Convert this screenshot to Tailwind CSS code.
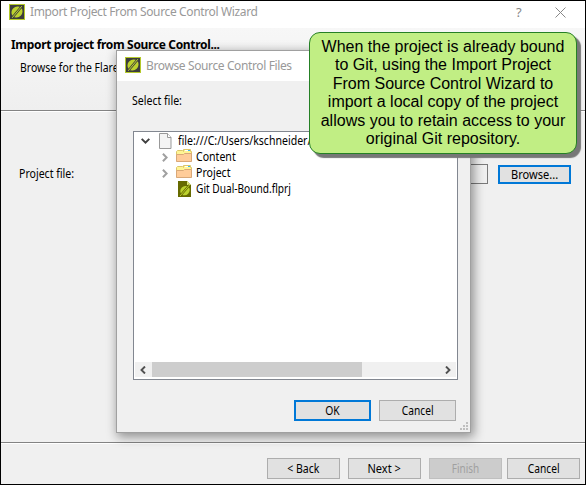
<!DOCTYPE html>
<html lang="en">
<head>
<meta charset="utf-8">
<title>Import Project From Source Control Wizard</title>
<script src="https://cdn.jsdelivr.net/npm/@tailwindcss/browser@4"></script>
</head>
<body class="w-[586px] h-[485px] overflow-hidden bg-[#f0f0f0] font-['Noto_Sans',sans-serif] text-[12px] leading-[16px] text-black whitespace-nowrap">
<svg class="hidden">
  <symbol id="flare" viewBox="0 0 16 16">
    <rect x=".5" y=".5" width="15" height="15" fill="#3d3d3d" stroke="#b4c92b"/>
    <ellipse cx="8" cy="8" rx="5.9" ry="5.2" transform="rotate(-45 8 8)" fill="#bdd22e"/>
    <path d="M3 14L13 2" stroke="#3d3d3d" stroke-width="2.4" fill="none"/>
    <path d="M3.2 13.8L12.8 2.2" stroke="#c3d82e" stroke-width="1" fill="none"/>
  </symbol>
  <symbol id="folder" viewBox="0 0 16 13">
    <path d="M.5 12V2.5l1-1h5l1 1V.5h7v2h1V12z" fill="#fff594" stroke="#dcc66a"/>
    <path d="M9 1h5v1H9z" fill="#fff"/><path d="M12 1h2v1h-2z" fill="#39b8e8"/>
    <path d="M.5 5.5h7l1-1h7v8H.5z" fill="#ffcc99" stroke="#d9a878"/>
  </symbol>
</svg>
<div class="relative w-[586px] h-[485px] border border-black flex flex-col">
  <header class="h-[27px] bg-white flex shrink-0 pl-2 pt-[3px]">
    <svg class="w-4 h-4"><use href="#flare"/></svg>
    <span class="ml-[5px] w-[486px] text-[#999] tracking-[-0.36px]">Import Project From Source Control Wizard</span>
    <span class="w-[10px] text-[#888] text-[13px]">?</span>
    <svg class="ml-[29px] mt-[3px] w-[11px] h-[11px]" viewBox="0 0 11 11"><path d="M.5.5l10 10M10.5.5l-10 10" stroke="#888" fill="none"/></svg>
  </header>
  <section class="h-[83px] shrink-0 bg-linear-to-b from-[#f7f7f7] to-[#efefef] border-b border-[#838383] pl-[10px] pt-[9px]">
    <h1 class="font-bold tracking-[-0.33px]">Import project from Source Control...</h1>
    <p class="pl-[9px] mt-[7px]"><span class="inline-block origin-left scale-x-[.87]">Browse for the Flare</span></p>
  </section>
  <main class="h-[331px] shrink-0 border-t border-white flex items-start pt-[52px] pl-[18px]">
    <div class="w-[100px] mt-[2px]"><span class="inline-block origin-left scale-x-[.88]">Project file:</span></div>
    <div class="w-[369px] h-5 border border-[#7a7a7a] bg-[#f0f0f0]"></div>
    <button class="ml-[10px] mt-px w-[73px] h-[19px] border-2 border-[#0078d7] bg-[#e1e1e1] flex items-center justify-center"><span class="scale-x-[.92]">Browse...</span></button>
  </main>
  <footer class="grow border-t border-[#838383] shadow-[inset_0_1px_#fff] flex pl-[266px] pt-[15px]">
    <button class="w-[73px] h-[21px] border border-[#adadad] bg-[#e1e1e1] flex items-center justify-center"><span class="scale-x-[.88]">&lt; Back</span></button>
    <button class="ml-2 w-[73px] h-[21px] border border-[#adadad] bg-[#e1e1e1] flex items-center justify-center"><span class="scale-x-[.92]">Next &gt;</span></button>
    <button class="ml-2 w-[73px] h-[21px] border border-[#bfbfbf] bg-[#ccc] text-[#a0a0a0] flex items-center justify-center"><span class="scale-x-[.83]">Finish</span></button>
    <button class="ml-[5px] w-[73px] h-[21px] border border-[#adadad] bg-[#e1e1e1] flex items-center justify-center"><span class="scale-x-[.85]">Cancel</span></button>
  </footer>

  <div class="absolute left-[115px] top-[49px] w-[355px] h-[383px] border border-[#a0a0a0] bg-[#f0f0f0] shadow-[2px_3px_10px_1px_#0006] flex flex-col">
    <div class="h-[30px] shrink-0 bg-white flex pl-2 pt-[6px]">
      <svg class="w-4 h-4"><use href="#flare"/></svg>
      <span class="ml-[5px] mt-px text-[#999] tracking-[-0.38px]">Browse Source Control Files</span>
    </div>
    <div class="ml-[15px] mt-3 h-[38px] shrink-0"><label class="inline-block origin-left scale-x-[.88]">Select file:</label></div>
    <div class="ml-4 w-[325px] h-[249px] shrink-0 border border-[#828790] bg-white pt-px px-px flex flex-col">
      <div class="h-4 flex items-center">
        <svg class="ml-[6px] w-[9px] h-[6px]" viewBox="0 0 9 6"><path d="M.7.9l3.8 3.7L8.3.9" stroke="#404040" stroke-width="2" fill="none"/></svg>
        <svg class="ml-[9px] w-[13px] h-4" viewBox="0 0 13 16"><path d="M.5.5h8l3.5 4v11H.5z" fill="#f4f4f4" stroke="#999"/><path d="M8.5.5v4H12" fill="#fff" stroke="#999"/></svg>
        <span class="ml-[6px] origin-left scale-x-[.88]">file:///C:/Users/kschneider/A</span>
      </div>
      <div class="h-4 flex items-center">
        <svg class="ml-[27px] w-[6px] h-[9px]" viewBox="0 0 6 9"><path d="M.9.7l3.7 3.8L.9 8.3" stroke="#a0a0a0" stroke-width="2" fill="none"/></svg>
        <svg class="ml-2 -mt-[3px] w-4 h-[13px]"><use href="#folder"/></svg>
        <span class="ml-[4px] origin-left scale-x-[.88]">Content</span>
      </div>
      <div class="h-4 flex items-center">
        <svg class="ml-[27px] w-[6px] h-[9px]" viewBox="0 0 6 9"><path d="M.9.7l3.7 3.8L.9 8.3" stroke="#a0a0a0" stroke-width="2" fill="none"/></svg>
        <svg class="ml-2 -mt-[3px] w-4 h-[13px]"><use href="#folder"/></svg>
        <span class="ml-[4px] origin-left scale-x-[.88]">Project</span>
      </div>
      <div class="h-4 flex items-center">
        <svg class="ml-[43px] w-[13px] h-4" viewBox="0 0 13 16"><path d="M0 0h9l4 4v12H0z" fill="#666a00"/><path d="M9 0l4 4H9z" fill="#dce67a"/><ellipse cx="7" cy="9.6" rx="5" ry="4.4" transform="rotate(-45 7 9.6)" fill="#bdd22e"/><path d="M2 15l9.5-11" stroke="#666a00" stroke-width="2.2"/><path d="M2 15l9.5-11" stroke="#c3d82e" stroke-width=".9"/></svg>
        <span class="ml-[5px] origin-left scale-x-[.845]">Git Dual-Bound.flprj</span>
      </div>
      <div class="mt-auto mb-[2px] h-[15px] bg-[#f0f0f0] flex items-center">
        <svg class="ml-[5px] w-[6px] h-[8px]" viewBox="0 0 6 8"><path d="M5 .5L1.5 4 5 7.5" stroke="#505050" stroke-width="1.9" fill="none"/></svg>
        <div class="ml-[6px] w-[210px] h-[15px] bg-[#cdcdcd]"></div>
        <svg class="ml-[83px] w-[6px] h-[8px]" viewBox="0 0 6 8"><path d="M1 .5L4.5 4 1 7.5" stroke="#505050" stroke-width="1.9" fill="none"/></svg>
      </div>
    </div>
    <div class="flex mt-5 ml-[177px]">
      <button class="w-[77px] h-[21px] border-2 border-[#0078d7] bg-[#e1e1e1] flex items-center justify-center"><span class="scale-x-[.86]">OK</span></button>
      <button class="ml-2 w-[77px] h-[21px] border border-[#adadad] bg-[#e1e1e1] flex items-center justify-center"><span class="scale-x-[.85]">Cancel</span></button>
    </div>
    <svg class="ml-auto mr-[2px] mt-px w-2 h-2" viewBox="0 0 8 8" fill="#bfbfbf"><path d="M6 0h2v2H6zM3 3h2v2H3zM6 3h2v2H6zM0 6h2v2H0zM3 6h2v2H3zM6 6h2v2H6z"/></svg>
  </div>

  <aside class="absolute left-[308px] top-[31px] w-[268px] h-[122px] rounded-[11px] border border-[#258025] bg-[#c1ee84] shadow-[4px_4px_1px_#777] pt-[5px] text-center font-['Liberation_Sans',sans-serif] text-[16px] leading-[18.4px]">
    <span class="block">When the project is already bound</span>
    <span class="block">to Git, using the Import Project</span>
    <span class="block">From Source Control Wizard to</span>
    <span class="block">import a local copy of the project</span>
    <span class="block">allows you to retain access to your</span>
    <span class="block">original Git repository.</span>
  </aside>
</div>
</body>
</html>
